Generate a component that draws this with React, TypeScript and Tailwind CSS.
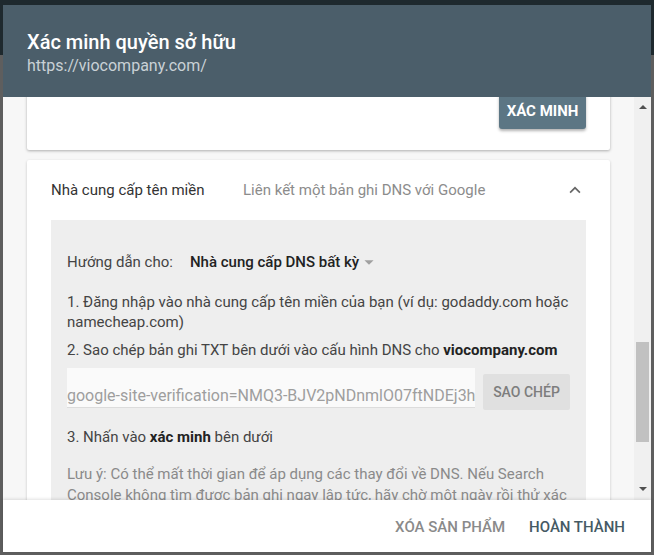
import React from "react";

export default function App() {
  return (
    <div
      className="h-[555px] w-[654px] overflow-hidden bg-[linear-gradient(#1e292e_55px,#5e5e5e_55px)] pt-[5px] px-[3px] pb-[3px]"
      style={{ fontFamily: "Roboto, 'Noto Sans', sans-serif" }}
    >
      <div className="flex h-full w-full flex-col bg-[#f7f7f7]">
        {/* Header */}
        <div className="relative z-10 h-[92px] shrink-0 bg-[#4b5e6a] pl-[24px] pt-[23px]">
          <div className="text-[20px] font-medium leading-[28px] text-white">Xác minh quyền sở hữu</div>
          <div className="text-[16px] leading-[20px] text-[#c9d1d6]">https://viocompany.com/</div>
        </div>

        {/* Scroll area */}
        <div className="flex min-h-0 flex-1">
          <div className="min-w-0 flex-1 overflow-hidden px-[24px]">
            {/* first card (scrolled) */}
            <div className="-mt-[20px] flex justify-end rounded-[2px] bg-white pt-[16px] pb-[21px] pr-[24px] shadow-[0_1px_3px_rgba(0,0,0,0.3)]">
              <div className="flex h-[36px] w-[87px] items-center justify-center rounded-[3px] bg-[#5c7684] text-[15px] font-bold text-white shadow-[0_2px_3px_rgba(0,0,0,0.3)]">
                XÁC MINH
              </div>
            </div>

            {/* second card */}
            <div className="mt-[10px] rounded-[2px] bg-white shadow-[0_1px_3px_rgba(0,0,0,0.2)]">
              <div className="flex h-[60px] items-center pl-[24px] pr-[23px]">
                <div className="w-[192px] text-[15px] text-[#333]">Nhà cung cấp tên miền</div>
                <div className="flex-1 text-[15px] text-[#8c8c8c]">Liên kết một bản ghi DNS với Google</div>
                <svg width="24" height="24" viewBox="0 0 24 24" className="text-[#666]">
                  <path d="M12 8.5l-5.5 5.5 1.2 1.2L12 10.9l4.3 4.3 1.2-1.2z" fill="currentColor" />
                </svg>
              </div>
              <div className="mx-[24px] bg-[#eeeeee] px-[16px] pt-[31px] pb-[40px]">
                <div className="flex items-center text-[15px] leading-[22px]">
                  <span className="text-[#444]">Hướng dẫn cho:</span>
                  <span className="ml-[17px] font-medium text-[#222]">Nhà cung cấp DNS bất kỳ</span>
                  <svg width="22" height="22" viewBox="0 0 24 24" className="-ml-[1px] text-[#a0a0a0]">
                    <path d="M7 10l5 5 5-5z" fill="currentColor" />
                  </svg>
                </div>
                <div className="mt-[19px] text-[15px] leading-[20px] text-[#444]">
                  1. Đăng nhập vào nhà cung cấp tên miền của bạn (ví dụ: godaddy.com hoặc namecheap.com)
                </div>
                <div className="mt-[8px] text-[15px] leading-[20px] text-[#444]">
                  2. Sao chép bản ghi TXT bên dưới vào cấu hình DNS cho{" "}
                  <span className="font-bold text-[#222]">viocompany.com</span>
                </div>
                <div className="mt-[8px] flex items-start">
                  <div className="flex h-[40px] w-[408px] items-end overflow-hidden whitespace-nowrap border-b border-[#dcdcdc] bg-[#fafafa] text-[16px] leading-[20px] text-[#9e9e9e]">
                    <span className="pb-[1px]">google-site-verification=NMQ3-BJV2pNDnmlO07ftNDEj3h</span>
                  </div>
                  <div className="ml-[8px] mt-[6px] flex h-[36px] w-[87px] items-center justify-center rounded-[2px] bg-[#e0e0e0] text-[14px] font-medium text-[#7d7d7d]">
                    SAO CHÉP
                  </div>
                </div>
                <div className="mt-[17px] text-[15px] leading-[20px] text-[#444]">
                  3. Nhấn vào <span className="font-bold text-[#222]">xác minh</span> bên dưới
                </div>
                <div className="mt-[17px] text-[15px] leading-[21px] text-[#8a8a8a]">
                  Lưu ý: Có thể mất thời gian để áp dụng các thay đổi về DNS. Nếu Search Console không tìm được bản ghi ngay lập tức, hãy chờ một ngày rồi thử xác minh lại.
                </div>
              </div>
            </div>
          </div>

          {/* Scrollbar */}
          <div className="flex w-[17px] shrink-0 flex-col items-center bg-[#f0f0f0]">
            <div className="flex h-[17px] items-center justify-center pt-[3px]">
              <div className="h-0 w-0 border-x-[4px] border-b-[4px] border-x-transparent border-b-[#505050]" />
            </div>
            <div className="mt-[228px] h-[100px] w-[13px] bg-[#c1c1c1]" />
            <div className="flex-1" />
            <div className="flex h-[17px] items-center justify-center pb-[6px]">
              <div className="h-0 w-0 border-x-[4px] border-t-[4px] border-x-transparent border-t-[#505050]" />
            </div>
          </div>
        </div>

        {/* Footer */}
        <div className="relative z-10 flex h-[52px] shrink-0 items-center justify-end gap-[24px] bg-white pt-[3px] pr-[26px] shadow-[0_-1px_3px_rgba(0,0,0,0.12)]">
          <span className="text-[15px] font-medium text-[#8a8a8a]">XÓA SẢN PHẨM</span>
          <span className="text-[15px] font-medium text-[#455a64]">HOÀN THÀNH</span>
        </div>
      </div>
    </div>
  );
}
